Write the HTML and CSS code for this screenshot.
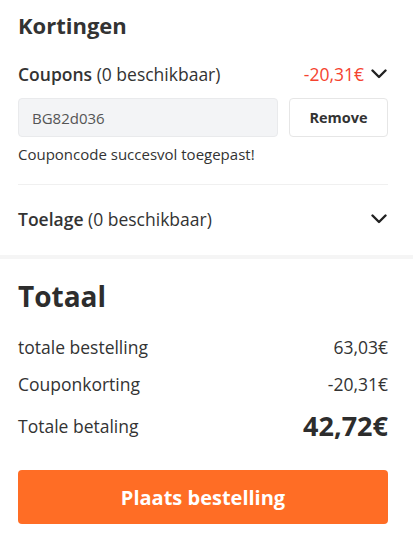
FILE: index.html
```html
<!DOCTYPE html>
<html lang="nl">
<head>
<meta charset="utf-8">
<title>Kortingen</title>
<link rel="stylesheet" href="styles.css">
</head>
<body>
<section class="discounts">
  <h2 class="title">Kortingen</h2>
  <div class="row coupon-row">
    <div class="label"><b>Coupons</b> (0 beschikbaar)</div>
    <div class="right">
      <span class="neg">-20,31€</span>
      <svg class="chev" width="16" height="10" viewBox="0 0 16 10"><path d="M1.5 1.5 L8 8 L14.5 1.5" fill="none" stroke="#222" stroke-width="2.4" stroke-linecap="round" stroke-linejoin="round"/></svg>
    </div>
  </div>
  <div class="code-row">
    <div class="code-input">BG82d036</div>
    <button class="remove">Remove</button>
  </div>
  <p class="msg">Couponcode succesvol toegepast!</p>
  <div class="divider"></div>
  <div class="row toelage-row">
    <div class="label"><b>Toelage</b> (0 beschikbaar)</div>
    <div class="right">
      <svg class="chev" width="16" height="10" viewBox="0 0 16 10"><path d="M1.5 1.5 L8 8 L14.5 1.5" fill="none" stroke="#222" stroke-width="2.4" stroke-linecap="round" stroke-linejoin="round"/></svg>
    </div>
  </div>
</section>
<div class="band"></div>
<section class="total">
  <h2 class="total-title">Totaal</h2>
  <div class="row line first">
    <span>totale bestelling</span><span>63,03€</span>
  </div>
  <div class="row line">
    <span>Couponkorting</span><span>-20,31€</span>
  </div>
  <div class="row grand">
    <span>Totale betaling</span><span class="grand-val">42,72€</span>
  </div>
  <button class="order">Plaats bestelling</button>
</section>
</body>
</html>
```
FILE: styles.css
```css
* { box-sizing: border-box; }
html, body { margin: 0; padding: 0; background: #fff; }
body {
  font-family: "Open Sans", "Noto Sans", sans-serif;
  color: #333;
  width: 413px;
}
.discounts { padding: 10px 25px 24px 18px; }
.title {
  margin: 0;
  font-size: 22px;
  line-height: 30px;
  font-weight: 700;
  color: #333;
}
.row {
  display: flex;
  justify-content: space-between;
  align-items: center;
}
.label { font-size: 17.5px; line-height: 24px; color: #333; }
.label b { font-weight: 600; }
.coupon-row { margin-top: 22px; }
.right { display: flex; align-items: center; gap: 7px; }
.neg { color: #f5432f; font-size: 17.5px; line-height: 24px; }
.chev { display: block; margin-right: 1px; }
.code-row {
  margin-top: 12px;
  display: flex;
  gap: 11px;
  height: 39px;
}
.code-input {
  flex: 0 0 260px;
  background: #f3f4f6;
  border: 1px solid #e9eaec;
  border-radius: 4px;
  padding-left: 13px;
  display: flex;
  align-items: center;
  font-size: 15px;
  color: #555;
}
.remove {
  flex: 1;
  background: #fff;
  border: 1px solid #e6e6e6;
  border-radius: 4px;
  font-family: "Open Sans", sans-serif;
  font-weight: 700;
  font-size: 14.5px;
  color: #333;
  padding: 0;
}
.msg {
  margin: 7px 0 0;
  font-size: 15px;
  line-height: 20px;
  color: #333;
}
.divider { margin-top: 20px; height: 1px; background: #f0f0f0; }
.toelage-row { margin-top: 22px; }
.band { height: 4px; background: #f5f5f5; }
.total { padding: 19px 25px 20px 18px; }
.total-title {
  margin: 0;
  font-size: 28px;
  line-height: 36px;
  font-weight: 700;
  color: #2d2d2d;
}
.line { font-size: 17.5px; line-height: 24px; margin-top: 13px; }
.line.first { margin-top: 21px; }
.grand { margin-top: 13px; font-size: 17.5px; line-height: 24px; }
.grand-val { font-size: 27px; line-height: 34px; font-weight: 700; color: #2d2d2d; }
.order {
  display: block;
  width: 100%;
  margin-top: 27px;
  height: 54px;
  border: none;
  border-radius: 4px;
  background: #ff6d25;
  color: #fff;
  font-family: "Open Sans", sans-serif;
  font-weight: 700;
  font-size: 20px;
}
```
